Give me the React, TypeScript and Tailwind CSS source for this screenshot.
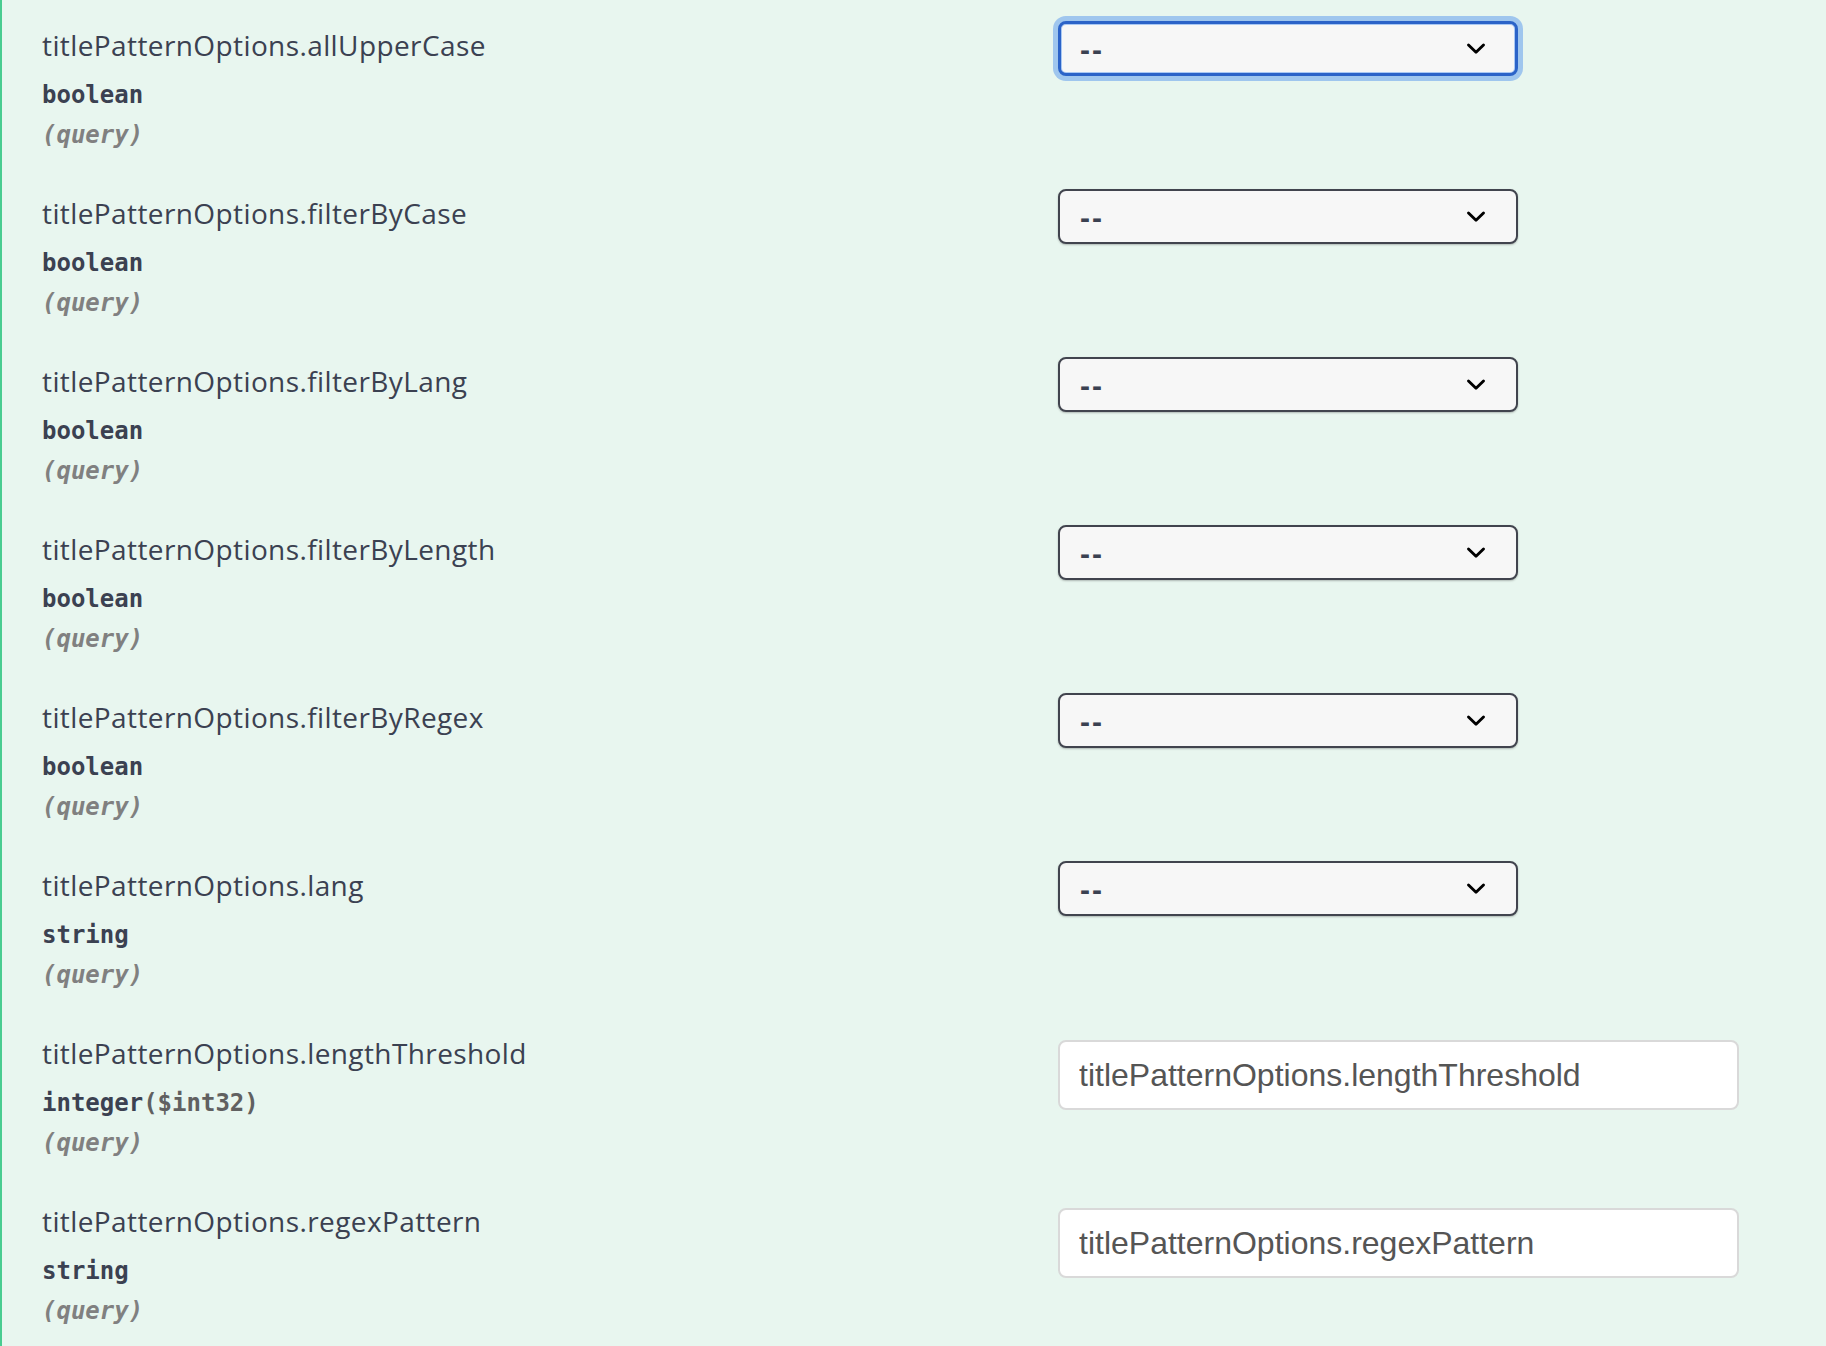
import React from "react";

type Param = {
  name: string;
  type: string;
  format?: string;
  control: "select" | "input";
  focused?: boolean;
};

const params: Param[] = [
  { name: "titlePatternOptions.allUpperCase", type: "boolean", control: "select", focused: true },
  { name: "titlePatternOptions.filterByCase", type: "boolean", control: "select" },
  { name: "titlePatternOptions.filterByLang", type: "boolean", control: "select" },
  { name: "titlePatternOptions.filterByLength", type: "boolean", control: "select" },
  { name: "titlePatternOptions.filterByRegex", type: "boolean", control: "select" },
  { name: "titlePatternOptions.lang", type: "string", control: "select" },
  { name: "titlePatternOptions.lengthThreshold", type: "integer", format: "($int32)", control: "input" },
  { name: "titlePatternOptions.regexPattern", type: "string", control: "input" },
];

function Chevron() {
  return (
    <svg width="20" height="13" viewBox="0 0 20 13" fill="none" aria-hidden="true">
      <path d="M2.5 3 L10 10.3 L17.5 3" stroke="#000" strokeWidth="2.9" strokeLinecap="round" strokeLinejoin="round" />
    </svg>
  );
}

function SelectBox({ focused }: { focused?: boolean }) {
  return (
    <div
      className={
        focused
          ? "mt-[21px] flex h-[55px] w-[460px] items-center justify-between rounded-[8px] border-[3px] border-[#2b63c8] bg-[#f7f7f7] pl-[19px] pr-[29px] shadow-[0_0_0_5px_rgba(86,150,238,0.5),inset_0_0_0_1px_#a9c8f3]"
          : "mt-[21px] flex h-[55px] w-[460px] items-center justify-between rounded-[8px] border-2 border-[#41444e] bg-[#f7f7f7] pl-[20px] pr-[30px] shadow-[0_1px_2px_0_rgba(0,0,0,0.25)]"
      }
    >
      <span className="mt-[3px] font-['Liberation_Sans',Arial,sans-serif] text-[30px] font-bold leading-none tracking-[2px] text-[#3b4151]">
        --
      </span>
      <Chevron />
    </div>
  );
}

function InputBox({ placeholder }: { placeholder: string }) {
  return (
    <input
      type="text"
      placeholder={placeholder}
      className="mt-[32px] h-[70px] w-[681px] rounded-[8px] border-2 border-[#d9d9d9] bg-white pl-[19px] font-['Liberation_Sans',Arial,sans-serif] text-[32px] text-[#555] outline-none placeholder:text-[#555555]"
    />
  );
}

export default function App() {
  return (
    <div className="min-h-screen w-full border-l-2 border-[#49cc90] bg-[#e8f6ef]">
      {params.map((p) => (
        <div key={p.name} className="flex h-[168px]">
          <div className="w-[1056px] shrink-0 pl-[40px] pt-[25px]">
            <div className="font-['Open_Sans',sans-serif] text-[28px] leading-[40px] tracking-[0.4px] text-[#3b4151]">
              {p.name}
            </div>
            <div className="mt-[14px] font-['DejaVu_Sans_Mono',monospace] text-[24px] font-bold leading-[32px] text-[#3b4151]">
              {p.type}
              {p.format && <span className="text-[#606060]">{p.format}</span>}
            </div>
            <div className="mt-[8px] font-['DejaVu_Sans_Mono',monospace] text-[24px] font-bold italic leading-[32px] text-[#808080]">
              (query)
            </div>
          </div>
          <div className="flex-1">
            {p.control === "select" ? <SelectBox focused={p.focused} /> : <InputBox placeholder={p.name} />}
          </div>
        </div>
      ))}
    </div>
  );
}
